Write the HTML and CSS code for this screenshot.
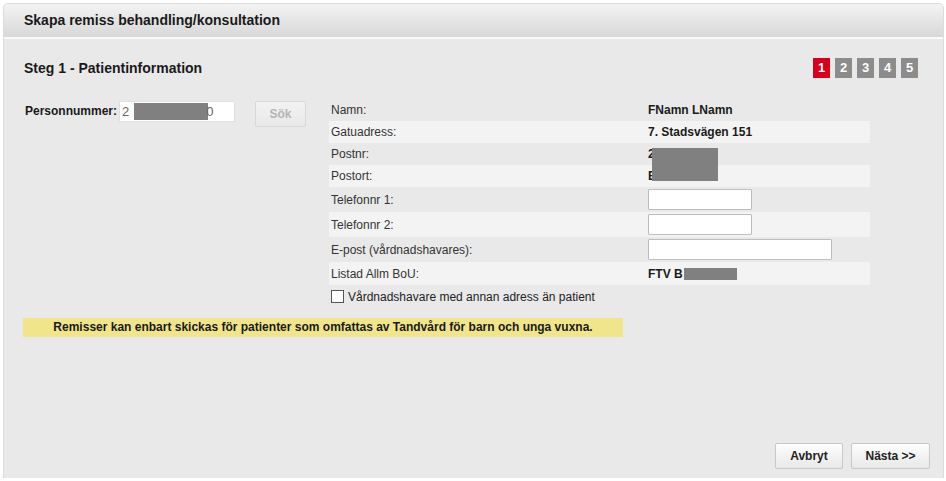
FILE: index.html
```html
<!DOCTYPE html>
<html lang="sv">
<head>
<meta charset="utf-8">
<title>Skapa remiss</title>
<link rel="stylesheet" href="styles.css">
</head>
<body>
<div class="panel">
  <div class="header">Skapa remiss behandling/konsultation</div>
  <div class="content">
    <div class="steprow">
      <div class="steptitle">Steg 1 - Patientinformation</div>
      <div class="steps">
        <span class="step active">1</span>
        <span class="step">2</span>
        <span class="step">3</span>
        <span class="step">4</span>
        <span class="step">5</span>
      </div>
    </div>
    <div class="main">
      <div class="search">
        <span class="pnr-label">Personnummer:</span>
        <div class="pnr-input"><span>2</span><span class="redact pnr-redact"></span><span>0</span></div>
        <button class="btn btn-disabled" disabled>Sök</button>
      </div>
      <div class="info">
        <div class="row"><span class="lbl">Namn:</span><span class="val">FNamn LNamn</span></div>
        <div class="row alt"><span class="lbl">Gatuadress:</span><span class="val">7. Stadsvägen 151</span></div>
        <div class="row"><span class="lbl">Postnr:</span><span class="val rel">2<span class="redact post-redact"></span></span></div>
        <div class="row alt"><span class="lbl">Postort:</span><span class="val">E</span></div>
        <div class="row inrow"><span class="lbl">Telefonnr 1:</span><span class="val"><span class="field short"></span></span></div>
        <div class="row inrow alt"><span class="lbl">Telefonnr 2:</span><span class="val"><span class="field short"></span></span></div>
        <div class="row inrow"><span class="lbl">E-post (vårdnadshavares):</span><span class="val"><span class="field long"></span></span></div>
        <div class="row alt listad"><span class="lbl">Listad Allm BoU:</span><span class="val">FTV B<span class="redact bou-redact"></span></span></div>
        <div class="row check"><span class="box"></span><span class="chklbl">Vårdnadshavare med annan adress än patient</span></div>
      </div>
    </div>
    <div class="notice">Remisser kan enbart skickas för patienter som omfattas av Tandvård för barn och unga vuxna.</div>
    <div class="footer">
      <button class="btn">Avbryt</button>
      <button class="btn next">Nästa &gt;&gt;</button>
    </div>
  </div>
</div>
</body>
</html>
```
FILE: styles.css
```css
* { box-sizing: border-box; }
html, body { margin: 0; padding: 0; background: #fff; }
body {
  padding: 3px 2px 3px 3px;
  font-family: "Liberation Sans", Arial, sans-serif;
  font-size: 12px;
  color: #222;
}
.panel {
  height: 475px;
  background: #e9e9e9;
  border: 1px solid #dcdcdc;
  border-bottom: none;
  border-radius: 5px 5px 0 0;
  display: flex;
  flex-direction: column;
  overflow: hidden;
}
.header {
  height: 35px;
  line-height: 33px;
  padding-left: 20px;
  font-size: 14px;
  font-weight: bold;
  color: #1a1a1a;
  background: linear-gradient(#f3f3f3, #d8d8d8);
  border-bottom: 2px solid #fafafa;
  flex: none;
}
.content {
  flex: 1;
  display: flex;
  flex-direction: column;
  padding: 0 13px 9px 20px;
}
.steprow {
  display: flex;
  justify-content: space-between;
  align-items: center;
  margin-top: 19px;
  height: 20px;
  padding-right: 12px;
}
.steptitle { font-size: 14px; font-weight: bold; color: #1a1a1a; }
.steps { display: flex; gap: 5px; }
.step {
  width: 17px;
  height: 20px;
  background: #8c8c8c;
  color: #fff;
  font-weight: bold;
  font-size: 13px;
  line-height: 20px;
  text-align: center;
}
.step.active { background: #d5001c; }
.main {
  display: flex;
  margin-top: 22px;
}
.search {
  width: 305px;
  display: flex;
  align-items: flex-start;
  flex: none;
}
.pnr-label {
  font-weight: bold;
  margin: 4px 0 0 1px;
  width: 94px;
  color: #1a1a1a;
}
.pnr-input {
  width: 116px;
  height: 21px;
  margin-top: 1px;
  background: #fff;
  border: 1px solid #e0e0e0;
  display: flex;
  align-items: center;
  padding-left: 2px;
  font-size: 13px;
  color: #666;
}
.redact { display: inline-block; background: #808080; }
.pnr-redact { width: 74px; height: 17px; margin-left: 5px; margin-right: -2px; }
.btn {
  font-family: "Liberation Sans", Arial, sans-serif;
  font-size: 12px;
  font-weight: bold;
  color: #222;
  height: 26px;
  padding: 0 10px;
  background: linear-gradient(#fdfdfd, #e8e8e8);
  border: 1px solid #c8c8c8;
  border-radius: 2px;
}
.btn-disabled {
  width: 51px;
  margin-left: 20px;
  margin-top: 1px;
  color: #b5b5b5;
  border-color: #d8d8d8;
  background: linear-gradient(#f3f3f3, #e8e8e8);
}
.info {
  width: 541px;
  margin-top: -1px;
}
.row {
  display: flex;
  align-items: center;
  height: 22px;
  padding-left: 2px;
}
.row.alt { background: #f3f3f3; }
.row.inrow { height: 25px; }
.row.listad { height: 23px; }
.row.check { height: 23px; padding-left: 2px; }
.lbl { width: 317px; color: #333; flex: none; }
.val { font-weight: bold; color: #1a1a1a; display: flex; align-items: center; }
.rel { position: relative; }
.post-redact {
  position: absolute;
  left: 4px;
  top: 1px;
  width: 66px;
  height: 33px;
}
.bou-redact { width: 53px; height: 12px; margin-left: 1px; }
.field {
  display: block;
  height: 21px;
  background: #fff;
  border: 1px solid #bdbdbd;
  border-radius: 1px;
}
.field.short { width: 104px; }
.field.long { width: 184px; }
.box {
  width: 13px;
  height: 13px;
  border: 1px solid #555;
  background: #fff;
  margin-right: 4px;
}
.chklbl { color: #222; }
.notice {
  width: 600px;
  margin-top: 10px;
  margin-left: -1px;
  height: 19px;
  line-height: 19px;
  background: #f0e58a;
  text-align: center;
  font-weight: bold;
  color: #1a1a1a;
}
.footer {
  margin-top: auto;
  display: flex;
  justify-content: flex-end;
  gap: 8px;
}
.footer .btn { height: 26px; width: 68px; }
.footer .btn.next { width: 79px; }
```
